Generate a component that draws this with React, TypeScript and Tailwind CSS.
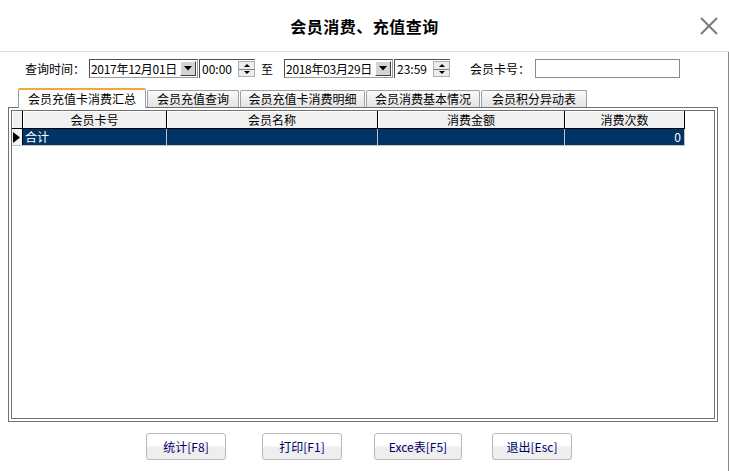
import React from "react";

const F = { fontFamily: '"Noto Sans CJK SC", "Noto Sans", sans-serif' };

function DropBtn() {
  return (
    <div className="w-[16px] h-[15px] bg-[#d4d4d4] border-t border-l border-t-white border-l-white border-b border-r border-b-[#404040] border-r-[#404040] flex items-center justify-center">
      <svg width="8" height="5" viewBox="0 0 8 5">
        <polygon points="0,0 8,0 4,4.5" fill="#000" />
      </svg>
    </div>
  );
}

function Spinner() {
  return (
    <div className="w-[17px] h-[16px] flex flex-col border border-[#b0b0b0] bg-[#ececec]">
      <div className="flex-1 flex items-center justify-center border-b border-[#808080]">
        <svg width="6" height="3" viewBox="0 0 6 3">
          <polygon points="0,3 6,3 3,0" fill="#000" />
        </svg>
      </div>
      <div className="flex-1 flex items-center justify-center">
        <svg width="6" height="3" viewBox="0 0 6 3">
          <polygon points="0,0 6,0 3,3" fill="#000" />
        </svg>
      </div>
    </div>
  );
}

function DateBox({ text }: { text: string }) {
  return (
    <div className="w-[109px] h-[19px] flex items-center justify-between border border-[#9a9a9a] border-t-[#505050] border-l-[#505050] bg-white pl-[1px] pr-[1px]">
      <span className="text-[12px] leading-none tracking-[-0.3px] text-black">{text}</span>
      <DropBtn />
    </div>
  );
}

function TimeBox({ text }: { text: string }) {
  return (
    <div className="w-[56px] h-[19px] flex items-center justify-between border-t border-l border-[#505050] bg-white pl-[2px]">
      <span className="text-[12px] leading-none text-black">{text}</span>
      <Spinner />
    </div>
  );
}

function Tab({ label, w, active }: { label: string; w: string; active?: boolean }) {
  if (active) {
    return (
      <div
        className={`${w} h-[20px] relative z-10 -mb-[1px] bg-white border-l border-r border-[#9a9a9a] border-t-2 border-t-[#eeaa33] rounded-t-[2px] flex items-center justify-center text-[12px] text-black`}
      >
        {label}
      </div>
    );
  }
  return (
    <div
      className={`${w} h-[17px] bg-gradient-to-b from-[#fafafa] to-[#e4e4e4] border-l border-r border-t border-[#a0a0a0] rounded-t-[2px] flex items-center justify-center text-[12px] text-black`}
    >
      {label}
    </div>
  );
}

function Btn({ label, w, ml }: { label: string; w: string; ml: string }) {
  return (
    <div
      className={`${w} ${ml} h-[27px] rounded-[3px] border border-[#b8b8b8] bg-gradient-to-b from-[#ffffff] from-45% to-[#eeeeee] to-55% flex items-center justify-center text-[12px] text-[#000066]`}
    >
      {label}
    </div>
  );
}

export default function App() {
  const cols = [
    { label: "会员卡号", w: "w-[144px]" },
    { label: "会员名称", w: "w-[211px]" },
    { label: "消费金额", w: "w-[187px]" },
    { label: "消费次数", w: "w-[120px]" },
  ];
  return (
    <div style={F} className="w-[729px] h-[471px] bg-white flex flex-col overflow-hidden">
      {/* Title bar */}
      <div className="h-[52px] shrink-0 border-b border-[#dddddd] grid grid-cols-[1fr_auto_1fr] items-center">
        <div />
        <div className="text-[16px] font-bold text-black tracking-[0.5px]">会员消费、充值查询</div>
        <div className="flex justify-end pr-[11px]">
          <svg width="18" height="18" viewBox="0 0 18 18">
            <line x1="1" y1="1" x2="17" y2="17" stroke="#7a7a7a" strokeWidth="2" />
            <line x1="17" y1="1" x2="1" y2="17" stroke="#7a7a7a" strokeWidth="2" />
          </svg>
        </div>
      </div>

      {/* Body */}
      <div className="flex-1 border-r border-[#8a8a8a] flex flex-col">
        {/* Query row */}
        <div className="mt-[7px] h-[19px] flex items-center pl-[25px] text-[12px] text-black">
          <span className="w-[60px]">查询时间：</span>
          <div className="ml-[4px]">
            <DateBox text="2017年12月01日" />
          </div>
          <div className="ml-[1px]">
            <TimeBox text="00:00" />
          </div>
          <span className="ml-[6px]">至</span>
          <div className="ml-[11px]">
            <DateBox text="2018年03月29日" />
          </div>
          <div className="ml-[1px]">
            <TimeBox text="23:59" />
          </div>
          <span className="ml-[20px] w-[60px]">会员卡号：</span>
          <div className="ml-[5px] w-[145px] h-[19px] border border-[#8a8a8a] bg-white" />
        </div>

        {/* Tabs */}
        <div className="mt-[10px] pl-[18px] flex items-end gap-[1px]">
          <Tab label="会员充值卡消费汇总" w="w-[128px]" active />
          <Tab label="会员充值查询" w="w-[92px]" />
          <Tab label="会员充值卡消费明细" w="w-[125px]" />
          <Tab label="会员消费基本情况" w="w-[114px]" />
          <Tab label="会员积分异动表" w="w-[106px]" />
        </div>

        {/* Panel */}
        <div className="ml-[8px] w-[710px] h-[315px] border border-[#707070] p-[2px] bg-white">
          <div className="w-full h-full border border-[#707070] bg-white">
            {/* Header */}
            <div className="flex h-[18px] border-b border-black w-[673px]">
              <div className="w-[11px] bg-[#f0f0f0] border-r border-black shadow-[inset_1px_1px_0_#ffffff]" />
              {cols.map((c) => (
                <div
                  key={c.label}
                  className={`${c.w} bg-[#f0f0f0] border-r border-black shadow-[inset_1px_1px_0_#ffffff] flex items-center justify-center text-[12px] text-black leading-none`}
                >
                  {c.label}
                </div>
              ))}
            </div>
            {/* Data row */}
            <div className="flex h-[17px] border-b border-[#c4c4c4] w-[673px]">
              <div className="w-[11px] bg-[#f4f4f4] border-r border-black flex items-center justify-start pl-[1px]">
                <svg width="7" height="11" viewBox="0 0 7 11">
                  <polygon points="0,0 7,5.5 0,11" fill="#000" />
                </svg>
              </div>
              <div className="w-[144px] bg-[#003366] border-r border-[#c0c0c0] flex items-center pl-[2px] text-[12px] text-white leading-none">
                合计
              </div>
              <div className="w-[211px] bg-[#003366] border-r border-[#c0c0c0]" />
              <div className="w-[187px] bg-[#003366] border-r border-[#c0c0c0]" />
              <div className="w-[120px] bg-[#003366] border-r border-[#c0c0c0] flex items-center justify-end pr-[3px] text-[12px] text-white leading-none">
                0
              </div>
            </div>
          </div>
        </div>

        {/* Buttons */}
        <div className="mt-[11px] flex pl-[146px]">
          <Btn label="统计[F8]" w="w-[80px]" ml="ml-0" />
          <Btn label="打印[F1]" w="w-[80px]" ml="ml-[36px]" />
          <Btn label="Exce表[F5]" w="w-[88px]" ml="ml-[32px]" />
          <Btn label="退出[Esc]" w="w-[80px]" ml="ml-[30px]" />
        </div>
      </div>
    </div>
  );
}
